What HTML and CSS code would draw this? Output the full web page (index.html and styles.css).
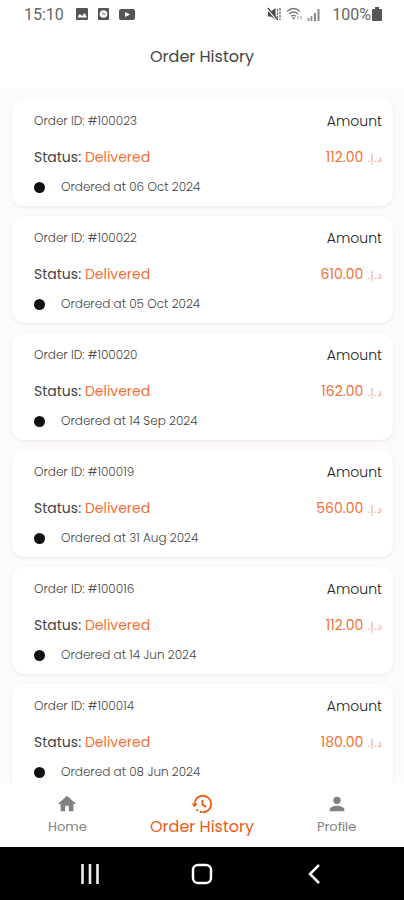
FILE: index.html
```html
<!DOCTYPE html>
<html lang="en">
<head>
  <meta charset="UTF-8">
  <meta name="viewport" content="width=device-width, initial-scale=1.0">
  <title>Order History</title>
  <link rel="stylesheet" href="styles.css">
</head>
<body>
  <!-- Status bar -->
  <div class="status-bar">
    <span class="clock">15:10</span>
    <svg width="12" height="12" viewBox="0 0 12 12"><rect width="12" height="12" rx="1" fill="#555"/><path d="M2 9.500V8l2-2 2 2 2.500-3L10.500 8v1.500z" fill="#fff"/></svg>
    <svg class="gap-left" width="11" height="12" viewBox="0 0 11 12"><rect width="11" height="12" rx="1" fill="#555"/><circle cx="5.500" cy="6" r="3.800" fill="#fff"/><path d="M4 4.500l1.500 1.700h2" fill="none" stroke="#555"/></svg>
    <svg class="gap-left" width="16" height="11" viewBox="0 0 16 11"><rect width="16" height="11" rx="2" fill="#555"/><path d="M6 3l5 2.500L6 8z" fill="#fff"/></svg>
    <span class="spacer"></span>
    <svg width="15" height="14" viewBox="0 0 15 14"><path d="M1 4.500h3L8.500 1v12L4 9.500H1z" fill="#444"/><path d="M0 1l10 12" stroke="#fff" stroke-width="2"/><path d="M1 1l10 12" stroke="#444" stroke-width="1.200"/><path d="M10.500 2v9M13 1v12" stroke="#666" stroke-width="1.300" stroke-dasharray="2.500 1"/></svg>
    <svg class="gap-wifi" width="17" height="14" viewBox="0 0 17 14"><g fill="none" stroke="#777" stroke-width="1.200"><path d="M1 4.500Q7.500-1.500 14 4.500M3 7q4.500-4 9 0M5 9.300q2.500-2 5 0"/></g><path d="M6 10.500h3L7.500 12.500z" fill="#555"/><path d="M12 9v3.500M15 9v3.500" stroke="#999"/></svg>
    <svg class="gap-wifi" width="14" height="13" viewBox="0 0 14 13"><path d="M1.500 13v-3M4.500 13V8" stroke="#888" stroke-width="1.700"/><path d="M8 13V5M11.500 13V1" stroke="#888" stroke-width="2"/></svg>
    <span class="percent">100%</span>
    <svg width="10" height="14" viewBox="0 0 10 14"><path d="M3 0h4v2h2q1 0 1 1v10q0 1-1 1H1q-1 0-1-1V3q0-1 1-1h2z" fill="#555"/></svg>
  </div>

  <header class="header">
    <h1>Order History</h1>
  </header>

  <!-- Orders -->
  <main class="orders">
    <article class="card">
      <div class="row"><span class="order-id">Order ID: #100023</span><span class="amount">Amount</span></div>
      <div class="row status"><span>Status: <b>Delivered</b></span><span class="price">112.00 <bdi class="currency" dir="rtl" lang="ar">د.إ.</bdi></span></div>
      <div class="date"><span class="dot"></span>Ordered at 06 Oct 2024</div>
    </article>
    <article class="card">
      <div class="row"><span class="order-id">Order ID: #100022</span><span class="amount">Amount</span></div>
      <div class="row status"><span>Status: <b>Delivered</b></span><span class="price">610.00 <bdi class="currency" dir="rtl" lang="ar">د.إ.</bdi></span></div>
      <div class="date"><span class="dot"></span>Ordered at 05 Oct 2024</div>
    </article>
    <article class="card">
      <div class="row"><span class="order-id">Order ID: #100020</span><span class="amount">Amount</span></div>
      <div class="row status"><span>Status: <b>Delivered</b></span><span class="price">162.00 <bdi class="currency" dir="rtl" lang="ar">د.إ.</bdi></span></div>
      <div class="date"><span class="dot"></span>Ordered at 14 Sep 2024</div>
    </article>
    <article class="card">
      <div class="row"><span class="order-id">Order ID: #100019</span><span class="amount">Amount</span></div>
      <div class="row status"><span>Status: <b>Delivered</b></span><span class="price">560.00 <bdi class="currency" dir="rtl" lang="ar">د.إ.</bdi></span></div>
      <div class="date"><span class="dot"></span>Ordered at 31 Aug 2024</div>
    </article>
    <article class="card">
      <div class="row"><span class="order-id">Order ID: #100016</span><span class="amount">Amount</span></div>
      <div class="row status"><span>Status: <b>Delivered</b></span><span class="price">112.00 <bdi class="currency" dir="rtl" lang="ar">د.إ.</bdi></span></div>
      <div class="date"><span class="dot"></span>Ordered at 14 Jun 2024</div>
    </article>
    <article class="card">
      <div class="row"><span class="order-id">Order ID: #100014</span><span class="amount">Amount</span></div>
      <div class="row status"><span>Status: <b>Delivered</b></span><span class="price">180.00 <bdi class="currency" dir="rtl" lang="ar">د.إ.</bdi></span></div>
      <div class="date"><span class="dot"></span>Ordered at 08 Jun 2024</div>
    </article>
  </main>

  <!-- Bottom navigation -->
  <nav class="tabs">
    <a href="#home" class="tab">
      <svg width="22" height="22" viewBox="0 0 24 24" fill="currentColor"><path d="M10 20v-6h4v6h5v-8h3L12 3 2 12h3v8z"/></svg>
      <span>Home</span>
    </a>
    <a href="#orders" class="tab active">
      <svg width="22" height="22" viewBox="0 0 24 24" fill="none" stroke="currentColor" stroke-width="2"><path d="M4 12a9 9 0 1 1 9 9"/><path d="M12.500 21a9 9 0 0 1-6.500-3.200" stroke-dasharray="3 2"/><path d="M0.500 11.500h7L4 15.500z" fill="currentColor" stroke="none"/><path d="M12.500 7.500v5.200l4 2.600"/></svg>
      <span>Order History</span>
    </a>
    <a href="#profile" class="tab">
      <svg width="22" height="22" viewBox="0 0 24 24" fill="currentColor"><circle cx="12" cy="8" r="4"/><path d="M12 14c-2.700 0-8 1.300-8 4v2h16v-2c0-2.700-5.300-4-8-4z"/></svg>
      <span>Profile</span>
    </a>
  </nav>

  <!-- System buttons -->
  <div class="system-bar">
    <button aria-label="Recent apps"><svg width="20" height="20" viewBox="0 0 20 20"><path d="M2.500 0v20M10 0v20M17.500 0v20" stroke="#eee" stroke-width="2.600"/></svg></button>
    <button aria-label="Home screen"><svg width="22" height="22" viewBox="0 0 22 22"><rect x="2" y="2" width="18" height="18" rx="5" fill="none" stroke="#fff" stroke-width="2.500"/></svg></button>
    <button aria-label="Back"><svg width="14" height="20" viewBox="0 0 14 20"><path d="M12 1L3 10l9 9" fill="none" stroke="#fff" stroke-width="2.500"/></svg></button>
  </div>
</body>
</html>
```
FILE: styles.css
```css
* {
  box-sizing: border-box;
}
body {
  display: flex;
  flex-direction: column;
  height: 100vh;
  margin: 0;
  overflow: hidden;
  background-color: #fff;
  color: #444;
  font-family: Poppins, Inter, sans-serif;
  font-weight: 300;
}
.status-bar {
  display: flex;
  align-items: center;
  flex-shrink: 0;
  height: 28px;
  padding: 0 22px 0 24px;
  color: #666;
  font-family: Roboto, sans-serif;
  font-size: 16px;
  font-weight: 400;
}
.clock {
  margin-right: 12px;
}
.gap-left {
  margin-left: 10px;
}
.gap-wifi {
  margin-left: 4px;
}
.spacer {
  flex: 1;
}
.percent {
  margin: 0 1px 0 11px;
}
.header {
  flex-shrink: 0;
  height: 60px;
  padding-top: 18px;
}
h1 {
  margin: 0;
  font-size: 16px;
  font-weight: 400;
  line-height: 22px;
  text-align: center;
}
.orders {
  flex: 1;
  min-height: 0;
  padding: 11px 11px 0 12px;
  overflow: hidden;
  background-color: #fdfafd;
}
.card {
  margin-bottom: 10px;
  padding: 12px 11px 9px 22px;
  background: #fff;
  border-radius: 12px;
  box-shadow: 0 1px 3px rgba(60, 40, 60, 0.1);
}
.row {
  display: flex;
  justify-content: space-between;
  height: 20px;
  line-height: 20px;
}
.order-id {
  font-size: 12px;
}
.amount {
  color: #222;
  font-size: 14px;
}
.status {
  margin-top: 16px;
  font-size: 14px;
  font-weight: 400;
}
.status b {
  color: #f26f35;
  font-weight: 400;
}
.price {
  color: #f26f35;
}
.currency {
  font-family: "DejaVu Sans", sans-serif;
  font-size: 11px;
  line-height: 12px;
  opacity: 0.6;
}
.date {
  display: flex;
  align-items: center;
  margin-top: 10px;
  font-size: 12px;
  line-height: 20px;
}
.dot {
  width: 11px;
  height: 11px;
  margin-right: 16px;
  background: #111;
  border-radius: 50%;
}
.tabs {
  display: flex;
  flex-shrink: 0;
  height: 64px;
  padding-top: 10px;
}
.tab {
  display: flex;
  flex: 1;
  flex-direction: column;
  align-items: center;
  color: #808080;
  font-size: 13px;
  font-weight: 400;
  line-height: 24px;
  text-decoration: none;
}
.tab.active {
  color: #ee5a16;
  font-size: 16px;
}
.system-bar {
  display: flex;
  align-items: center;
  justify-content: space-between;
  flex-shrink: 0;
  height: 53px;
  padding: 0 78px;
  background: #000;
}
button {
  display: flex;
  align-items: center;
  justify-content: center;
  width: 24px;
  padding: 0;
  background: none;
  border: none;
}
```
